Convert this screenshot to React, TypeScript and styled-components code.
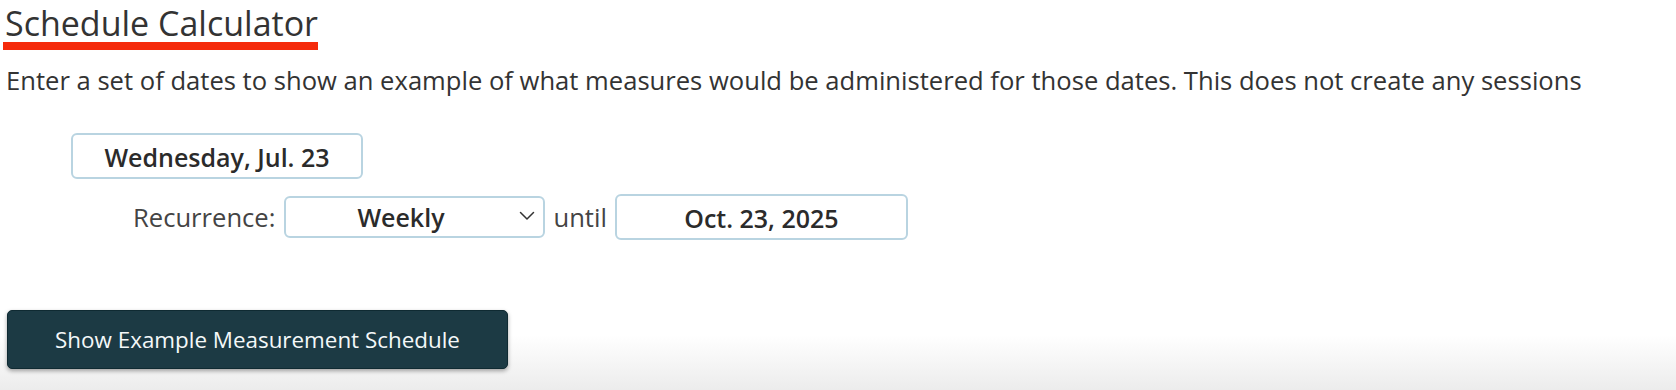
import React from "react";
import styled, { createGlobalStyle } from "styled-components";

const GlobalStyle = createGlobalStyle`
  html, body { margin: 0; padding: 0; }
  body {
    min-height: 100vh;
    font-family: "Open Sans", "Liberation Sans", sans-serif;
    color: #333;
    background: linear-gradient(to bottom, #ffffff 0px, #ffffff 335px, #ececec 390px);
  }
`;

const Page = styled.div`
  display: flex;
  flex-direction: column;
  align-items: flex-start;
  padding: 0 0 0 6px;
`;

const Title = styled.h2`
  margin: 5px 0 0 -3px;
  padding: 0 0 0 2px;
  font-size: 34px;
  font-weight: 400;
  line-height: 37px;
  color: #333;
  border-bottom: 8px solid #f52a0b;
`;

const Description = styled.p`
  margin: 14px 0 0 0;
  font-size: 25.6px;
  line-height: 34px;
  color: #333;
`;

const DateBox = styled.div<{ $width: number }>`
  box-sizing: border-box;
  width: ${(p) => p.$width}px;
  height: 46px;
  border: 2px solid #b9d4e1;
  border-radius: 6px;
  background: #fff;
  display: flex;
  align-items: center;
  justify-content: center;
  padding-top: 2px;
  font-size: 25px;
  font-weight: 600;
  color: #2b2b2b;
`;

const FirstRow = styled.div`
  margin: 35px 0 0 65px;
  display: flex;
`;

const RecurrenceRow = styled.div`
  margin: 15px 0 0 127px;
  display: flex;
  align-items: center;
  gap: 8px;
`;

const Label = styled.span`
  font-size: 25.6px;
  color: #444;
  margin-right: 1px;
`;

const SelectWrap = styled.div`
  position: relative;
  display: flex;
`;

const Select = styled.select`
  appearance: none;
  -webkit-appearance: none;
  box-sizing: border-box;
  width: 261px;
  height: 42px;
  border: 2px solid #b9d4e1;
  border-radius: 6px;
  background: #fff;
  padding: 0 28px 0 0;
  font-family: "Open Sans", "Liberation Sans", sans-serif;
  font-size: 25px;
  font-weight: 600;
  color: #2b2b2b;
  text-align: center;
  text-align-last: center;
`;

const Chevron = styled.svg`
  position: absolute;
  right: 10px;
  top: 15px;
  pointer-events: none;
`;

const Until = styled.span`
  font-size: 25.6px;
  color: #444;
`;

const PrimaryButton = styled.button`
  margin: 70px 0 0 1px;
  box-sizing: border-box;
  width: 501px;
  height: 59px;
  border: 1px solid #0f2a32;
  border-radius: 5px;
  background: #1c3a44;
  color: #f4f8f9;
  font-family: "Open Sans", "Liberation Sans", sans-serif;
  font-size: 22.4px;
  font-weight: 400;
  box-shadow: 0 2px 4px rgba(0, 0, 0, 0.35);
  cursor: pointer;
`;

export default function App() {
  return (
    <>
      <GlobalStyle />
      <Page>
        <Title>Schedule Calculator</Title>
        <Description>
          Enter a set of dates to show an example of what measures would be administered for those
          dates. This does not create any sessions
        </Description>
        <FirstRow>
          <DateBox $width={292}>Wednesday, Jul. 23</DateBox>
        </FirstRow>
        <RecurrenceRow>
          <Label>Recurrence:</Label>
          <SelectWrap>
            <Select defaultValue="Weekly">
              <option>Daily</option>
              <option>Weekly</option>
              <option>Monthly</option>
            </Select>
            <Chevron width="16" height="10" viewBox="0 0 16 10">
              <polyline
                points="1.5,1.5 8,8 14.5,1.5"
                fill="none"
                stroke="#333"
                strokeWidth="1.5"
                strokeLinecap="round"
                strokeLinejoin="round"
              />
            </Chevron>
          </SelectWrap>
          <Until>until</Until>
          <DateBox $width={293}>Oct. 23, 2025</DateBox>
        </RecurrenceRow>
        <PrimaryButton>Show Example Measurement Schedule</PrimaryButton>
      </Page>
    </>
  );
}
